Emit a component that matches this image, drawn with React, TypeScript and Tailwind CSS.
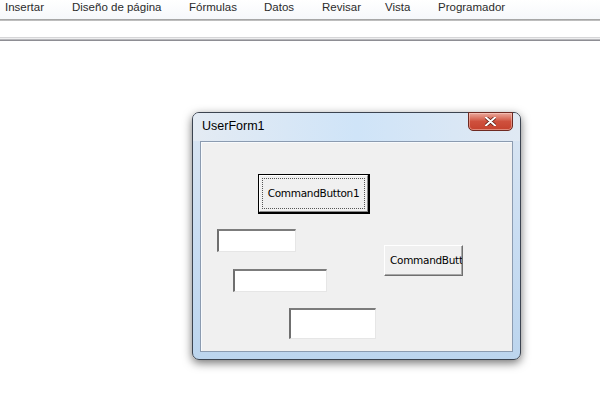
const menuItems = [
  { label: "Insertar", width: "w-[67px]" },
  { label: "Diseño de página", width: "w-[117px]" },
  { label: "Fórmulas", width: "w-[75px]" },
  { label: "Datos", width: "w-[58px]" },
  { label: "Revisar", width: "w-[63px]" },
  { label: "Vista", width: "w-[53px]" },
  { label: "Programador", width: "w-[90px]" },
];

export default function App() {
  return (
    <div className="h-[394px] w-[600px] overflow-hidden bg-white font-['Liberation_Sans',Arial,sans-serif]">
      <Ribbon />
      <div className="pl-[192px] pt-[71px]">
        <UserFormWindow />
      </div>
    </div>
  );
}

function Ribbon() {
  return (
    <div>
      <div className="flex h-[19px] items-start bg-gradient-to-b from-white to-[#f6f8fb] pl-[5px] pt-px">
        {menuItems.map((item) => (
          <span key={item.label} className={`${item.width} shrink-0 text-[11.5px] leading-[13px] text-[#2b2b2b]`}>
            {item.label}
          </span>
        ))}
      </div>
      <div className="h-[2px] bg-gradient-to-b from-[#9c9c9c] to-[#c9c9c9]" />
      <div className="h-[16px] bg-white" />
      <div className="h-px bg-[#d6d6d8]" />
      <div className="h-px bg-[#eeeeef]" />
      <div className="h-px bg-[#b8b8bc]" />
      <div className="h-px bg-[#8e8e94]" />
    </div>
  );
}

function UserFormWindow() {
  return (
    <div className="relative w-[329px] h-[248px] rounded-[7px] border border-[#3c4450] bg-gradient-to-b from-[#dbe6f2] via-[#c9ddf2] to-[#bcd5ee] shadow-[0_3px_10px_rgba(0,0,0,0.55)]">
      <div className="flex h-[28px] items-start justify-between rounded-t-[6px] bg-gradient-to-r from-[#e4ebf3] via-[#cfe4f8] to-[#e0e9f3]">
        <span className="pl-[9px] pt-[6px] text-[12.5px] leading-[15px] text-black">UserForm1</span>
        <CloseButton />
      </div>
      <div className="mx-[7px] h-[211px] border border-[#8b9bb0] bg-[#f0f0f0]">
        <div className="relative h-full w-full border border-[#f7fafd] border-b-0 border-r-0">
          <DefaultButton />
          <TextBox className="left-[15px] top-[86px] h-[23px] w-[79px]" />
          <TextBox className="left-[31px] top-[126px] h-[23px] w-[94px]" />
          <TextBox className="left-[87px] top-[165px] h-[31px] w-[87px]" />
          <div className="absolute left-[182px] top-[102px] flex h-[31px] w-[79px] items-center overflow-hidden border border-[#ffffff] border-r-[#6f6f6f] border-b-[#6f6f6f] bg-[#f0f0f0] pl-[5px] shadow-[inset_-1px_-1px_0_#a8a8a8]">
            <span className="whitespace-nowrap font-['DejaVu_Sans',sans-serif] text-[10.5px] tracking-[-0.3px] text-black">CommandButton2</span>
          </div>
        </div>
      </div>
    </div>
  );
}

function CloseButton() {
  return (
    <div className="mr-[7px] -mt-px flex h-[19px] w-[45px] items-center justify-center rounded-b-[5px] border border-[#6e2a22] bg-gradient-to-b from-[#e9a89c] via-[#cf503d] to-[#c5422e] shadow-[inset_0_0_0_1px_rgba(255,220,210,0.45)]">
      <svg width="11" height="9" viewBox="0 0 11 9" aria-hidden="true">
        <path d="M1 0.5 L10 8.5 M10 0.5 L1 8.5" stroke="#5a1a12" strokeWidth="3.4" strokeLinecap="round" />
        <path d="M1 0.5 L10 8.5 M10 0.5 L1 8.5" stroke="#ffffff" strokeWidth="2" strokeLinecap="round" />
      </svg>
    </div>
  );
}

function DefaultButton() {
  return (
    <div className="absolute left-[56px] top-[31px] h-[40px] w-[112px] border border-black border-r-2 border-b-2 bg-[#f0f0f0]">
      <div className="h-full w-full border border-white border-r-[#8a8a8a] border-b-[#8a8a8a] p-[2px]">
        <div className="flex h-full w-full items-center justify-center border border-dotted border-[#555555]">
          <span className="whitespace-nowrap font-['DejaVu_Sans',sans-serif] text-[10.5px] tracking-[-0.3px] text-black">CommandButton1</span>
        </div>
      </div>
    </div>
  );
}

function TextBox({ className }: { className: string }) {
  return (
    <div
      className={`absolute border-t-2 border-l-2 border-r border-b border-t-[#7c7c7c] border-l-[#6f6f6f] border-r-[#e6e6e6] border-b-[#e6e6e6] bg-white ${className}`}
    />
  );
}
